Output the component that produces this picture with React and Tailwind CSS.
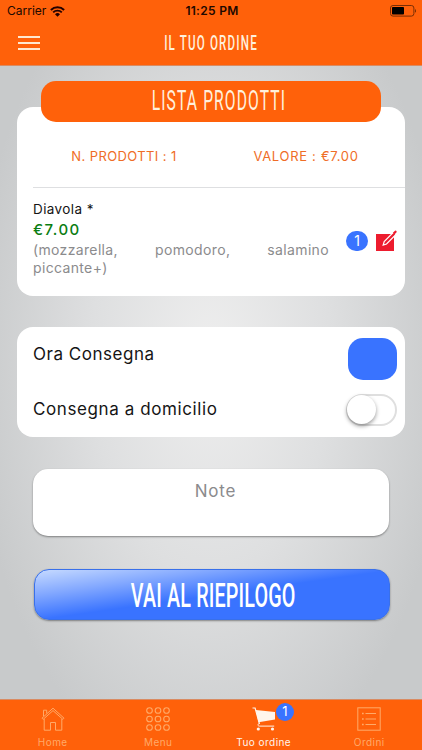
import { useState } from "react";

const WifiIcon = () => (
  <svg className="ml-[4px] h-[11px] w-[15px]" viewBox="0 0 15 11" fill="none">
    <path d="M.9 4A9.4 9.4 0 0 1 14.1 4" stroke="#200" strokeWidth="2" />
    <path d="M3.2 6.4a6.2 6.2 0 0 1 8.6 0" stroke="#200" strokeWidth="1.9" />
    <path d="M7.5 10.8 5 8.2a3.7 3.7 0 0 1 5 0z" fill="#200" />
  </svg>
);

const BatteryIcon = () => (
  <svg className="h-[12px] w-[27px]" viewBox="0 0 27 12" fill="none">
    <rect x=".5" y=".5" width="23.4" height="10.6" rx="2.5" stroke="#7a2e05" />
    <rect x="2" y="2" width="12" height="7.6" rx=".8" fill="#000" />
    <path d="M25 4c1.4.4 1.4 3.4 0 3.8z" fill="#7a2e05" />
  </svg>
);

const EditIcon = () => (
  <svg className="h-[22px] w-[23px]" viewBox="0 0 23 22" fill="none">
    <path d="M1 4h18v17H1z" fill="#ed1c2e" />
    <path d="M8.2 15 9.2 11.6 18.6 2.2l2.4 2.3-9.5 9.5z" stroke="#fff" strokeWidth="1.2" fill="#ed1c2e" />
    <path d="M17.9 2.8 20 .8q.8-.5 1.4.1t0 1.5L19.4 4.5z" fill="#ed1c2e" />
  </svg>
);

const HomeIcon = () => (
  <svg className="h-6 w-6" viewBox="0 0 24 24" fill="none" stroke="currentColor">
    <path d="m1 11.2 11-10 11 10-1.1 1.2L12 3.6l-9.9 8.8z" />
    <path d="M3.2 12v11.2h6.3v-7.7h5v7.7h6.3V12M2.5 9.2V3.2h3.2v3.2" />
  </svg>
);

const MenuIcon = () => (
  <svg className="h-6 w-6" viewBox="0 0 24 24" fill="none" stroke="currentColor" strokeWidth="1.1">
    {[3.5, 12, 20.5].map((y) =>
      [3.5, 12, 20.5].map((x) => <circle key={x + "-" + y} cx={x} cy={y} r="2.8" />)
    )}
  </svg>
);

const CartIcon = () => (
  <svg className="h-6 w-6" viewBox="0 0 24 24" fill="none" stroke="currentColor">
    <path d="M.5 1h2.6l4.4 16" strokeWidth="1.2" />
    <path d="M3.8 3 23 5v7.4L6.5 15.2z" fill="currentColor" stroke="none" />
    <circle cx="6.3" cy="22" r="1.6" fill="currentColor" stroke="none" />
    <circle cx="20.5" cy="22" r="1.6" fill="currentColor" stroke="none" />
    <path d="M7.3 16.5c-2 .8-1.8 2.6.4 2.6h14.5" />
  </svg>
);

const OrdersIcon = () => (
  <svg className="h-6 w-6" viewBox="0 0 24 24" fill="none" stroke="currentColor">
    <rect x=".8" y=".8" width="22.4" height="22.4" />
    <path d="M8.5 6.5h10.5M8.5 12h10.5M8.5 17.5h10.5" />
    <path d="M5 6.5h1.7M5 12h1.7M5 17.5h1.7" strokeWidth="1.7" />
  </svg>
);

const TabItem = ({ label, active, badge, children }) => {
  return (
    <a
      className={
        (active ? "text-[#fff5ec] " : "text-[#ffaa68] ") +
        "relative flex flex-1 flex-col items-center pt-[7px]"
      }
    >
      {children}
      <span className="mt-[4px] text-[10px] leading-[14px] tracking-[0.45px]">{label}</span>
      {badge && (
        <span className="absolute top-[3px] left-[65px] flex h-[18px] w-[18px] items-center justify-center rounded-full bg-[#3973ff] text-[13px] text-white">
          {badge}
        </span>
      )}
    </a>
  );
};

const App = () => {
  const [delivery, setDelivery] = useState(false);

  return (
    <div className="flex h-[750px] w-[422px] flex-col overflow-hidden bg-[radial-gradient(ellipse_240px_430px_at_50%_48%,#eeeeee_0%,#dedfe0_50%,#c8cacb_100%)] font-['Inter',sans-serif]">
      <header className="h-[66px] border-b border-[#d98b62] bg-[#ff610a]">
        <div className="grid h-[22px] grid-cols-3 items-center pr-[5px] pl-[7px] text-[12px] text-[#200800]">
          <div className="flex items-center">
            Carrier
            <WifiIcon />
          </div>
          <div className="text-center font-semibold tracking-[0.3px] whitespace-nowrap">11:25 PM</div>
          <div className="flex justify-end">
            <BatteryIcon />
          </div>
        </div>
        <div className="grid h-[42px] grid-cols-[60px_1fr_60px] items-center">
          <button type="button" className="ml-[18px] flex w-[22px] flex-col gap-[4px]">
            <span className="h-[2px] bg-[#ffe8cf]"></span>
            <span className="h-[2px] bg-[#ffe8cf]"></span>
            <span className="h-[2px] bg-[#ffe8cf]"></span>
          </button>
          <h1 className="scale-x-[0.58] text-center font-['Roboto',sans-serif] text-[20px] leading-none font-medium tracking-[2px] whitespace-nowrap text-[#fff0dc]">
            IL TUO ORDINE
          </h1>
        </div>
      </header>

      <main className="flex flex-1 flex-col px-[17px] pt-[15px]">
        <div className="z-10 mx-[24px] flex h-[41px] w-[340px] items-center justify-center rounded-[15px] bg-[#ff610a] pl-[16px]">
          <h2 className="scale-x-[0.58] font-['Roboto',sans-serif] text-[27px] leading-none tracking-[1.9px] whitespace-nowrap text-[#fff0dc]">
            LISTA PRODOTTI
          </h2>
        </div>
        <section className="-mt-[15px] h-[189px] w-[388px] rounded-[16px] bg-white pl-[16px]">
          <div className="flex h-[81px] items-end border-b border-[#dedfe1] pb-[21px] text-[13px] leading-[20px] text-[#ef6d26]">
            <span className="w-[182px] text-center tracking-[0.4px]">N. PRODOTTI : 1</span>
            <span className="w-[182px] text-center tracking-[0.7px]">VALORE : €7.00</span>
          </div>
          <div className="flex items-center pt-[11px]">
            <div className="w-[296px]">
              <p className="text-[13.5px] leading-[20px] tracking-[0.4px] text-[#151515]">Diavola *</p>
              <p className="text-[15px] leading-[22px] font-medium tracking-[1.5px] text-[#0a7d12]">€7.00</p>
              <p className="text-justify text-[14px] leading-[18px] tracking-[0.35px] text-[#8b8b8d]">
                (mozzarella, pomodoro, salamino piccante+)
              </p>
            </div>
            <span className="mt-[5px] ml-[17px] flex h-[20px] w-[22px] items-center justify-center rounded-[10px] bg-[#3973ff] text-[14px] text-white">
              1
            </span>
            <span className="mt-[5px] ml-[7px]">
              <EditIcon />
            </span>
          </div>
        </section>

        <section className="mt-[31px] flex h-[110px] w-[388px] flex-col rounded-[16px] bg-white pr-[8px] pl-[16px] text-[17px] text-[#151515]">
          <div className="flex h-[53px] items-start justify-between pt-[11px]">
            <span className="leading-[32px] tracking-[0.52px]">Ora Consegna</span>
            <button type="button" className="h-[42px] w-[49px] rounded-[15px] bg-[#3973ff]"></button>
          </div>
          <div className="flex h-[57px] items-center justify-between">
            <span className="mt-[2px] tracking-[0.6px]">Consegna a domicilio</span>
            <button
              type="button"
              onClick={() => setDelivery(!delivery)}
              className={
                (delivery ? "justify-end bg-[#3973ff] " : "justify-start bg-white ") +
                "mt-[2px] flex h-[32px] w-[51px] items-center rounded-full border-2 border-[#dfdfdf]"
              }
            >
              <span className="-ml-[1px] h-[29px] w-[29px] rounded-full bg-white shadow-[0_2px_4px_rgba(0,0,0,0.4)]"></span>
            </button>
          </div>
        </section>

        <textarea
          placeholder="Note"
          className="mt-[32px] ml-[16px] h-[67px] w-[356px] resize-none rounded-[15px] bg-white pt-[10px] pl-[9px] text-center text-[17px] tracking-[0.8px] shadow-[0_1px_2px_rgba(0,0,0,0.4)] placeholder:text-[#8b8b8d]"
        ></textarea>

        <button
          type="button"
          className="mt-[33px] ml-[17px] flex h-[51px] w-[356px] items-center justify-center rounded-[15px] border border-[#3970ea] bg-[linear-gradient(172deg,#c6daff_0%,#84a9ff_25%,#3973ff_51%)] pl-[2px] shadow-[0_1px_2px_rgba(0,0,0,0.4)]"
        >
          <span className="scale-x-[0.58] font-['Roboto',sans-serif] text-[34px] leading-none font-medium tracking-[0.3px] whitespace-nowrap text-white">
            VAI AL RIEPILOGO
          </span>
        </button>
      </main>

      <nav className="flex h-[51px] border-t border-[#d98b62] bg-[#ff610a]">
        <TabItem label="Home">
          <HomeIcon />
        </TabItem>
        <TabItem label="Menu">
          <MenuIcon />
        </TabItem>
        <TabItem label="Tuo ordine" active badge="1">
          <CartIcon />
        </TabItem>
        <TabItem label="Ordini">
          <OrdersIcon />
        </TabItem>
      </nav>
    </div>
  );
};

export default App;
